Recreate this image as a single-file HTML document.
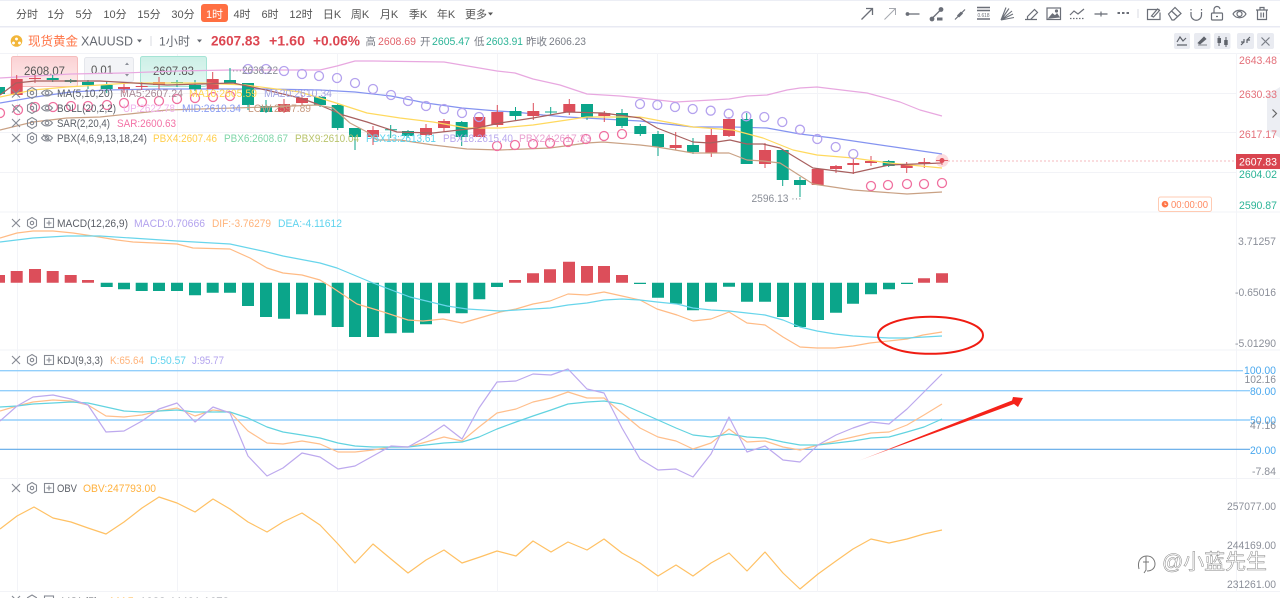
<!DOCTYPE html>
<html lang="zh"><head><meta charset="utf-8"><title>XAUUSD</title>
<style>
html,body{margin:0;padding:0;background:#fff;width:1280px;height:598px;overflow:hidden}
svg{display:block;filter:blur(.35px);font-family:"Liberation Sans","Noto Sans CJK SC",sans-serif;font-size:11px}
.t{fill:#555;font-size:11px}
.ax{fill:#8b8f99;font-size:11px}
.l{fill:none;stroke-linejoin:round;stroke-width:1.2}
.ic{fill:none;stroke:#6b6f78;stroke-width:1.2}
.li{fill:none;stroke:#868a93;stroke-width:1.1}
.lt{fill:#5c6068;font-size:11px}
.bl{fill:#4aa8ee;font-size:11px}
</style></head><body>
<svg width="1280" height="598" viewBox="0 0 1280 598" xmlns="http://www.w3.org/2000/svg">
<defs>
<linearGradient id="ar" gradientUnits="userSpaceOnUse" x1="858" y1="461" x2="905" y2="443"><stop offset="0" stop-color="#ffd4d4"/><stop offset="1" stop-color="#f5231a"/></linearGradient>
<linearGradient id="rb" x1="0" y1="0" x2="0" y2="1"><stop offset="0" stop-color="#fbd2d4"/><stop offset="1" stop-color="#fdecec"/></linearGradient>
<linearGradient id="gb" x1="0" y1="0" x2="0" y2="1"><stop offset="0" stop-color="#cdf0e7"/><stop offset="1" stop-color="#e5f8f3"/></linearGradient>
</defs>
<rect width="1280" height="598" fill="#fff"/>
<rect y="0" width="1280" height="1" fill="#eceef5"/>
<rect y="26" width="1280" height="1.5" fill="#e8eaf3"/>
<path d="M0 53.5H1280M0 93.5H1236M0 132.5H1236M0 172.5H1236M0 212H1280M0 350H1280M0 478.5H1280M0 591.5H1280" stroke="#f2f3f7" fill="none"/>
<path d="M17.5 53V592M177.5 53V592M337.5 53V592M497.5 53V592M657.5 53V592M817.5 53V592M1236.5 53V592" stroke="#f3f4f8" fill="none"/>

<g class="t" text-anchor="middle">
<text x="27" y="18">分时</text><text x="56" y="18">1分</text><text x="84" y="18">5分</text><text x="115" y="18">10分</text><text x="149" y="18">15分</text><text x="183" y="18">30分</text>
<text x="242" y="18">4时</text><text x="270" y="18">6时</text><text x="301" y="18">12时</text><text x="332" y="18">日K</text><text x="360" y="18">周K</text><text x="389" y="18">月K</text><text x="418" y="18">季K</text><text x="446" y="18">年K</text><text x="476" y="18">更多</text>
</g>
<path d="M488 12.5h5l-2.500 3z" fill="#555"/>
<rect x="201" y="4" width="27" height="18" rx="3" fill="#ff6f42"/>
<text x="214.500" y="18" text-anchor="middle" fill="#fff" font-size="11">1时</text>

<circle cx="16.500" cy="41" r="5.800" fill="#f2b63a"/>
<path d="M16.500 37.500a1.500 1.500 0 1 1-.01 0zM13.500 41.500a1.500 1.500 0 1 1-.01 0zM19.500 41.500a1.500 1.500 0 1 1-.01 0z" fill="#fff"/>
<text x="28" y="45.500" font-size="12.500" fill="#ff7547" textLength="50" lengthAdjust="spacingAndGlyphs">现货黄金</text>
<text x="81" y="45.500" font-size="13" fill="#666a72" textLength="52" lengthAdjust="spacingAndGlyphs">XAUUSD</text>
<path d="M137 39.500h5l-2.500 3z" fill="#666a72"/>
<rect x="150.500" y="36" width="1" height="10" fill="#d9dbe2"/>
<text x="159" y="45.500" font-size="12" fill="#666a72" textLength="31" lengthAdjust="spacingAndGlyphs">1小时</text>
<path d="M197 39.500h5l-2.500 3z" fill="#666a72"/>
<g font-weight="700" font-size="13.500" fill="#dc4651">
<text x="211" y="45.500" textLength="49" lengthAdjust="spacingAndGlyphs">2607.83</text>
<text x="269" y="45.500" textLength="36" lengthAdjust="spacingAndGlyphs">+1.60</text>
<text x="313" y="45.500" textLength="47" lengthAdjust="spacingAndGlyphs">+0.06%</text>
</g>
<g font-size="11">
<text x="365.500" y="45" fill="#7a7e87" font-size="10.500">高</text>
<text x="378" y="45" fill="#e2636b" textLength="38" lengthAdjust="spacingAndGlyphs">2608.69</text>
<text x="420" y="45" fill="#7a7e87" font-size="10.500">开</text>
<text x="432" y="45" fill="#2cb497" textLength="38" lengthAdjust="spacingAndGlyphs">2605.47</text>
<text x="474" y="45" fill="#7a7e87" font-size="10.500">低</text>
<text x="486" y="45" fill="#2cb497" textLength="37" lengthAdjust="spacingAndGlyphs">2603.91</text>
<text x="526" y="45" fill="#7a7e87" font-size="10.500">昨收</text>
<text x="549" y="45" fill="#7a7e87" textLength="37" lengthAdjust="spacingAndGlyphs">2606.23</text>
</g>

<g fill="#e9ebf1">
<rect x="1174" y="33" width="16" height="16" rx="2"/><rect x="1194" y="33" width="16.500" height="16" rx="2"/><rect x="1214" y="33" width="16.500" height="16" rx="2"/><rect x="1237" y="33" width="17" height="16" rx="2"/><rect x="1257" y="33" width="17" height="16" rx="2"/>
</g>
<path d="M1177 42l3-5 3 4 3-3M1177 45h10" fill="none" stroke="#5f636b" stroke-width="1.200"/>
<path d="M1198 45h9M1198 43l6-6 2 2-6 5z" fill="#5f636b" stroke="#5f636b" stroke-width=".8"/>
<path d="M1219 36v10M1226 37v10" stroke="#5f636b" stroke-width="1"/><rect x="1217.500" y="38" width="3.500" height="5" fill="#5f636b"/><rect x="1224.200" y="40" width="3.500" height="5" fill="#5f636b"/>
<path d="M1241 45l3-3M1250 37l-3 3M1244 39v3h-3M1247 43v-3h3" fill="none" stroke="#5f636b" stroke-width="1.200"/>
<path d="M1261.500 37.500l8 8m0-8l-8 8" stroke="#7a7e87" stroke-width="1.200"/>

<g class="ic">
<path d="M861.500 19.500L872 9M866 8.500h6.500V15" stroke-width="1.300"/>
<path d="M884.500 19.500L895 9M889 8.500h6.500V15" stroke="#a6a9b0" stroke-width="1"/>
<path d="M907 14h12.500" stroke-width="1.300"/><circle cx="907.500" cy="14" r="1.300" fill="#6b6f78"/>
<path d="M932 18.500L941 9.500" stroke-width="1.300"/><circle cx="932" cy="19" r="1.800" fill="#6b6f78"/><circle cx="941" cy="9.500" r="1.800" fill="#6b6f78"/><rect x="937" y="17.500" width="5.500" height="3" fill="#6b6f78" stroke="none"/>
<path d="M955 19.500L965 9.500"/><path d="M958 16.500L962 12.500" stroke-width="3"/>
<path d="M977 7.500h13M977 10.500h13M977 19h13" stroke-width="1.400"/>
<path d="M1001 20L1006 7.500M1001 20L1009 8.500M1001 20L1012 11M1001 20L1013 14M1001 20L1014 17.500" stroke-width="1.100"/>
<path d="M1025 19.500h12M1027.500 16.500l7-7 3 3-7 7h-3z"/>
<rect x="1047" y="8" width="13.500" height="11.500"/><path d="M1049 18l3.500-4 2.500 2 2-2 2 3z" fill="#6b6f78"/><circle cx="1056.500" cy="11" r="1" fill="#6b6f78"/>
<path d="M1070 15l4-4 4 3 6-5"/><path d="M1070 18.500h14" stroke-dasharray="1.500 1.500"/>
<path d="M1094.500 14h13" stroke-width="1.300"/><path d="M1101 11.500v5"/>
<path d="M1117.500 13h2.500M1122 13h2.500M1126.500 13h2.500" stroke-width="2"/>
<path d="M1138 9v9" stroke="#dfe1e7"/>
<path d="M1159.500 9.500h-12v10h12.500v-7M1151.500 16l6-7 2 1.500-6 6.500z"/>
<path d="M1168.500 14l6.500-6.500 6 6-7 6.500h-2zM1171.500 11l6.500 6"/>
<path d="M1191 12v3a5 5 0 0 0 10.500 0v-3M1191 9v1.500M1201.500 9v1.500"/>
<rect x="1211.500" y="13" width="11" height="7" rx="1"/><path d="M1214 13v-3a3 3 0 0 1 6-1M1216 16.500h2"/>
<path d="M1233 14c3-5 10-5 13 0c-3 5-10 5-13 0z"/><circle cx="1239.500" cy="14" r="2.500"/>
<path d="M1256 10h12M1260 10V7.500h4V10M1257.500 10v9.500h9V10M1261 12.500v5M1263.500 12.500v5"/>
</g>
<text x="977.500" y="17" font-size="5" fill="#6b6f78" textLength="12" lengthAdjust="spacingAndGlyphs">0.618</text>

<path d="M1280 87L1267 95V130L1280 138Z" fill="#eceef3"/>
<path d="M1272.500 109.500l4 4-4 4" fill="none" stroke="#666" stroke-width="1.200"/>

<rect x="11.500" y="56.500" width="66" height="30" rx="2" fill="url(#rb)" stroke="#f5bcbc"/>
<rect x="84.500" y="57.500" width="49" height="24" rx="2" fill="#f3f4f7" stroke="#e5e7ec"/>
<rect x="140.500" y="56.500" width="66" height="30" rx="2" fill="url(#gb)" stroke="#a5e4d5"/>
<text x="24" y="75" font-size="11.500" fill="#555" textLength="41" lengthAdjust="spacingAndGlyphs">2608.07</text>
<text x="91" y="74" font-size="11.500" fill="#555" textLength="22" lengthAdjust="spacingAndGlyphs">0.01</text>
<text x="153" y="75" font-size="11.500" fill="#555" textLength="41" lengthAdjust="spacingAndGlyphs">2607.83</text>
<path d="M125 65l2-2.500 2 2.500zM125 74l2 2.500 2-2.500z" fill="#8b8f98"/>

<polyline class="l" stroke="#e8a8e0" points="0,78 35,76 71,74 124,73 177,71 230,70 266,70 320,70 337,66 355,61 373,61 444,62 497,71 515,73 533,79 560,85 587,94 620,96 640,98 676,102 729,99 747,96 767,95 787,90 800,88 817,87 850,91 867,93 900,102 920,110 942,116"/>
<polyline class="l" stroke="#8493f0" points="0,103 35,97 71,92 107,90 160,89 212,89 266,89 320,90 355,92 391,96 426,103 462,108 497,111 515,112 543,115 567,117 640,121 693,127 733,127 767,128 800,134 833,138 942,154"/>

<path stroke="#0ba58a" stroke-width="1" fill="none" d="M52.700 75V82M70.700 79V83M88 80V89M106.700 82V93M177 80V87M195 80V91M230 68V83M248 83V110M266 100V113M320 96V107M337.700 103V130M355 137V150M390.700 125V138M408 130V138M461.700 121V146M515.500 107V120M550.700 107V115M587 104V120M622 109V128M640.300 124V136M658 131V156M693 138V154M746.700 113V164M782.700 150V186M800 177V197M888.700 160V167M385 129.800H397M545 112H557"/>
<path stroke="#dc4e5a" stroke-width="1" fill="none" d="M16.700 75V95M35 75V83M124 83V93M141.700 82V90M159 77V89M212.700 72V90M284 99V113M302 95V105M373 126V145M426 124V137M444 119V132M497.300 105V127M533.300 103V120M569.300 99V115M604.300 111V122M675.700 132V150M711.300 128V157M729 117V137M765 143V168M836 165V173M853.300 159V174M871 156V166M906.700 162V173M924.300 158V168M942 158V165"/>
<path fill="#0ba58a" d="M-7 87h12v7h-12zM46.700 78h12v2h-12zM64.700 80h12v2h-12zM82 82h12v3h-12zM100.700 85h12v4h-12zM171 82h12v1h-12zM189 85h12v4h-12zM224 80h12v3h-12zM242 83h12v22h-12zM260 106h12v6h-12zM314 97h12v8h-12zM331.700 105h12v23h-12zM349 128h12v9h-12zM402 131h12v5h-12zM455.700 122h12v15h-12zM509.500 111h12v5h-12zM581 104h12v13h-12zM616 113h12v13h-12zM634.300 126h12v8h-12zM652 134h12v13h-12zM687 145h12v7h-12zM740.700 119h12v45h-12zM776.700 150h12v30h-12zM794 180h12v5h-12zM882.700 161h12v5h-12z"/>
<path fill="#dc4e5a" d="M10.700 79h12v16h-12zM29 78h12v1h-12zM118 87h12v2h-12zM135.700 86h12v1h-12zM153 82h12v3h-12zM206.700 79h12v10h-12zM278 104h12v8h-12zM296 98h12v5h-12zM367 130h12v7h-12zM420 128h12v7h-12zM438 121h12v7h-12zM473.300 117h12v20h-12zM491.300 112h12v13h-12zM527.300 111h12v5h-12zM563.300 104h12v8h-12zM598.300 113h12v3h-12zM669.700 145h12v3h-12zM705.300 135h12v18h-12zM723 119h12v17h-12zM759 150h12v14h-12zM811.700 169h12v16h-12zM830 166h12v3h-12zM847.300 163h12v2h-12zM865 161h12v2h-12zM900.700 164h12v4h-12zM918.300 162h12v2h-12zM936 160h12v1h-12z"/>

<polyline class="l" stroke="#ffd95e" points="0,97 33,90 67,87 100,85 130,83 200,83 245,85 300,92 333,102 367,113 400,118 433,122 467,128 500,128 533,125 567,120 587,117 640,117 693,127 733,130 763,138 793,150 817,155 853,158 889,163 942,168"/>
<polyline class="l" stroke="#a8605f" points="0,95 16,83 35,81 100,81 167,85 233,83 266,90 300,98 317,104 343,115 367,122 397,132 433,133 477,128 500,123 533,118 567,112 603,113 640,118 657,128 693,142 710,143 730,140 747,144 763,144 780,148 813,168 853,173 889,165 942,163"/>
<polyline class="l" stroke="#c9a184" points="0,130 33,122 67,118 100,117 167,110 267,107 317,105 333,108 350,123 367,132 377,140 400,140 433,145 467,149 500,150 550,148 587,143 603,142 640,145 657,147 693,153 729,153 747,160 763,161 780,163 813,184 853,190 907,194 942,192"/>

<g fill="none" stroke="#b4a2ee" stroke-width="1.300">
<circle cx="248" cy="69" r="4.500"/><circle cx="266" cy="69" r="4.500"/><circle cx="284" cy="71" r="4.500"/><circle cx="302" cy="74" r="4.500"/><circle cx="319" cy="76" r="4.500"/><circle cx="337" cy="78" r="4.500"/><circle cx="355" cy="83" r="4.500"/><circle cx="373" cy="89" r="4.500"/><circle cx="391" cy="95" r="4.500"/><circle cx="408" cy="101" r="4.500"/><circle cx="426" cy="106" r="4.500"/><circle cx="444" cy="109" r="4.500"/><circle cx="462" cy="113" r="4.500"/><circle cx="479" cy="117" r="4.500"/>
<circle cx="640" cy="104" r="4.500"/><circle cx="657.300" cy="105" r="4.500"/><circle cx="675" cy="107" r="4.500"/><circle cx="692.700" cy="109" r="4.500"/><circle cx="710.700" cy="110.700" r="4.500"/><circle cx="728.700" cy="113.700" r="4.500"/><circle cx="746.300" cy="116.300" r="4.500"/><circle cx="764.300" cy="117" r="4.500"/><circle cx="782.300" cy="122" r="4.500"/><circle cx="800" cy="129.700" r="4.500"/><circle cx="817.300" cy="139" r="4.500"/><circle cx="835.700" cy="147" r="4.500"/><circle cx="853.300" cy="154" r="4.500"/>
</g>
<g fill="none" stroke="#f0709f" stroke-width="1.300">
<circle cx="0" cy="113" r="4.500"/><circle cx="18" cy="110" r="4.500"/><circle cx="35" cy="107" r="4.500"/><circle cx="53" cy="107" r="4.500"/><circle cx="71" cy="106" r="4.500"/><circle cx="88" cy="106" r="4.500"/><circle cx="107" cy="105" r="4.500"/><circle cx="124" cy="103" r="4.500"/><circle cx="142" cy="102" r="4.500"/><circle cx="159" cy="101" r="4.500"/><circle cx="177" cy="99" r="4.500"/><circle cx="195" cy="98" r="4.500"/><circle cx="213" cy="97" r="4.500"/><circle cx="230" cy="96" r="4.500"/>
<circle cx="497" cy="146" r="4.500"/><circle cx="515" cy="145" r="4.500"/><circle cx="533" cy="144" r="4.500"/><circle cx="550" cy="143" r="4.500"/><circle cx="568" cy="142" r="4.500"/><circle cx="586" cy="139" r="4.500"/><circle cx="604" cy="136" r="4.500"/><circle cx="622" cy="134" r="4.500"/>
<circle cx="871" cy="186" r="4.500"/><circle cx="888" cy="185" r="4.500"/><circle cx="907" cy="184" r="4.500"/><circle cx="924" cy="184" r="4.500"/><circle cx="942" cy="183" r="4.500"/>
</g>

<path d="M948 161H1236" stroke="#f6b9bd" stroke-dasharray="2 2" fill="none"/>
<circle cx="942" cy="160.500" r="6.500" fill="#f58c94" opacity=".3"/><circle cx="942" cy="160.500" r="2.500" fill="#e0505c"/>

<text x="232" y="74" font-size="11" fill="#8b8f98" textLength="46" lengthAdjust="spacingAndGlyphs">···2638.22</text>
<text x="751.500" y="202" font-size="11" fill="#8b8f98" textLength="50" lengthAdjust="spacingAndGlyphs">2596.13 ···</text>

<g class="li">
<path d="M12 89.500l8 8m0-8l-8 8M12 104.500l8 8m0-8l-8 8M12 119l8 8m0-8l-8 8M12 134l8 8m0-8l-8 8"/>
<path d="M32 87.500l4.500 2.700v5.600l-4.500 2.700-4.500-2.700v-5.600zM32 102.500l4.500 2.700v5.600l-4.500 2.700-4.500-2.700v-5.600zM32 117.500l4.500 2.700v5.600l-4.500 2.700-4.500-2.700v-5.600zM32 132.500l4.500 2.700v5.600l-4.500 2.700-4.500-2.700v-5.600z"/>
<circle cx="32" cy="93" r="1.700"/><circle cx="32" cy="108" r="1.700"/><circle cx="32" cy="123" r="1.700"/><circle cx="32" cy="138" r="1.700"/>
<path d="M41.500 93c3-4 8-4 11 0c-3 4-8 4-11 0zM41.500 108c3-4 8-4 11 0c-3 4-8 4-11 0zM41.500 123c3-4 8-4 11 0c-3 4-8 4-11 0zM41.500 138c3-4 8-4 11 0c-3 4-8 4-11 0zM43 134.500l8 7"/>
<circle cx="47" cy="93" r="1.800"/><circle cx="47" cy="108" r="1.800"/><circle cx="47" cy="123" r="1.800"/><circle cx="47" cy="138" r="1.800"/>
</g>
<text class="lt" x="57" y="97" textLength="56" lengthAdjust="spacingAndGlyphs">MA(5,10,20)</text>
<text x="120" y="97" fill="#a98a96" textLength="63" lengthAdjust="spacingAndGlyphs">MA5:2607.24</text>
<text x="189" y="97" fill="#ffd54f" textLength="68" lengthAdjust="spacingAndGlyphs">MA10:2605.59</text>
<text x="264" y="97" fill="#a4a4e2" textLength="68" lengthAdjust="spacingAndGlyphs">MA20:2610.34</text>
<text class="lt" x="57" y="112" textLength="59" lengthAdjust="spacingAndGlyphs">BOLL(20,2,2)</text>
<text x="123" y="112" fill="#f0b4ec" textLength="52" lengthAdjust="spacingAndGlyphs">UP:2622.78</text>
<text x="182" y="112" fill="#8a9cf2" textLength="59" lengthAdjust="spacingAndGlyphs">MID:2610.34</text>
<text x="248" y="112" fill="#c89a80" textLength="63" lengthAdjust="spacingAndGlyphs">LOW:2597.89</text>
<text class="lt" x="57" y="127" textLength="53" lengthAdjust="spacingAndGlyphs">SAR(2,20,4)</text>
<text x="117" y="127" fill="#f372a6" textLength="59" lengthAdjust="spacingAndGlyphs">SAR:2600.63</text>
<text class="lt" x="57" y="142" textLength="90" lengthAdjust="spacingAndGlyphs">PBX(4,6,9,13,18,24)</text>
<text x="153" y="142" fill="#ffcf4d" textLength="64" lengthAdjust="spacingAndGlyphs">PBX4:2607.46</text>
<text x="224" y="142" fill="#7fd6a8" textLength="64" lengthAdjust="spacingAndGlyphs">PBX6:2608.67</text>
<text x="295" y="142" fill="#b9c46c" textLength="64" lengthAdjust="spacingAndGlyphs">PBX9:2610.04</text>
<text x="366" y="142" fill="#5cd4ee" textLength="70" lengthAdjust="spacingAndGlyphs">PBX13:2613.61</text>
<text x="443" y="142" fill="#b9a8ee" textLength="70" lengthAdjust="spacingAndGlyphs">PBX18:2615.40</text>
<text x="519" y="142" fill="#eaa0d0" textLength="72" lengthAdjust="spacingAndGlyphs">PBX24:2617.33</text>

<text x="1239" y="64" fill="#e4707a" textLength="38" lengthAdjust="spacingAndGlyphs">2643.48</text>
<text x="1239" y="98" fill="#e4707a" textLength="38" lengthAdjust="spacingAndGlyphs">2630.33</text>
<text x="1239" y="138" fill="#e4707a" textLength="38" lengthAdjust="spacingAndGlyphs">2617.17</text>
<text x="1239" y="178" fill="#2cb497" textLength="38" lengthAdjust="spacingAndGlyphs">2604.02</text>
<text x="1239" y="209" fill="#2cb497" textLength="38" lengthAdjust="spacingAndGlyphs">2590.87</text>
<rect x="1236" y="154" width="44" height="15" fill="#d9444f"/>
<text x="1239" y="165.500" fill="#fff" textLength="38" lengthAdjust="spacingAndGlyphs">2607.83</text>
<rect x="1158.500" y="197" width="53" height="14.500" rx="2" fill="#fff" stroke="#ffcbb3"/>
<circle cx="1165" cy="204.200" r="3.300" fill="#ff7547"/><path d="M1165 202.500v2h1.500" stroke="#fff" stroke-width=".7" fill="none"/>
<text x="1171" y="208" font-size="10.500" fill="#ff8a62" textLength="37" lengthAdjust="spacingAndGlyphs">00:00:00</text>

<g class="li">
<path d="M12 219l8 8m0-8l-8 8"/><path d="M32 217.500l4.500 2.700v5.600l-4.500 2.700-4.500-2.700v-5.600z"/><circle cx="32" cy="223" r="1.700"/>
<rect x="44.500" y="218.500" width="9" height="9"/><path d="M46.500 223h5M49 220.500v5"/>
</g>
<text class="lt" x="57" y="227" textLength="71" lengthAdjust="spacingAndGlyphs">MACD(12,26,9)</text>
<text x="134" y="227" fill="#b3a3ee" textLength="71" lengthAdjust="spacingAndGlyphs">MACD:0.70666</text>
<text x="212" y="227" fill="#ffb37a" textLength="59" lengthAdjust="spacingAndGlyphs">DIF:-3.76279</text>
<text x="278" y="227" fill="#5fd3ee" textLength="64" lengthAdjust="spacingAndGlyphs">DEA:-4.11612</text>
<path fill="#dc4e5a" d="M-7 275h12v7.700h-12zM10.700 271h12v11.700h-12zM29 269h12v13.700h-12zM46.700 271h12v11.700h-12zM64.700 275h12v7.700h-12zM82 280h12v2.700h-12zM509 280h12v2.700h-12zM527 273.300h12v9.400h-12zM544 269.300h12v13.400h-12zM563 261.700h12v21h-12zM581 266h12v16.700h-12zM598 266h12v16.700h-12zM616 275h12v7.700h-12zM918 278.300h12v4.400h-12zM936 273.300h12v9.400h-12z"/>
<path fill="#0ba58a" d="M100.700 282.700h12v4.300h-12zM118 282.700h12v6.600h-12zM135.700 282.700h12v8.300h-12zM153 282.700h12v8.300h-12zM171 282.700h12v8.300h-12zM189 282.700h12v12.600h-12zM206.700 282.700h12v10h-12zM224 282.700h12v10h-12zM242 282.700h12v23.300h-12zM260 282.700h12v34.300h-12zM278 282.700h12v36h-12zM296 282.700h12v31.600h-12zM314 282.700h12v32.600h-12zM331.700 282.700h12v44.300h-12zM349 282.700h12v54.300h-12zM367 282.700h12v54.300h-12zM384.700 282.700h12v50.600h-12zM402 282.700h12v50h-12zM420 282.700h12v41.600h-12zM438 282.700h12v30.600h-12zM455.700 282.700h12v30.600h-12zM473.300 282.700h12v16.600h-12zM491 282.700h12v4.300h-12zM634 282.700h12v1.300h-12zM652 282.700h12v15h-12zM670 282.700h12v21h-12zM687 282.700h12v27.600h-12zM705 282.700h12v19h-12zM723 282.700h12v4h-12zM741 282.700h12v19h-12zM759 282.700h12v19h-12zM777 282.700h12v34.300h-12zM794 282.700h12v44.300h-12zM812 282.700h12v37.300h-12zM830 282.700h12v30h-12zM847 282.700h12v21h-12zM865 282.700h12v11.600h-12zM883 282.700h12v6.600h-12zM901 282.700h12v1.300h-12z"/>
<polyline class="l" stroke="#ffbb85" points="0,238 17,233 33,231 53,231 73,233 93,236 117,240 133,242 177,244 193,248 230,249 250,258 267,268 283,273 302,275 320,280 333,288 357,304 377,310 408,320 423,321 443,319 462,323 483,317 500,312 516,309 533,304 550,301 568,294 587,295 604,292 622,296 640,300 657,309 677,315 693,321 711,319 729,312 747,323 765,325 783,337 800,347 817,348 835,348 853,346 870,343 907,339 923,335 942,332"/>
<polyline class="l" stroke="#68d5eb" points="0,242 33,238 67,236 100,236 177,241 230,244 267,252 283,256 320,263 337,268 373,283 410,297 447,306 467,309 500,311 533,309 550,308 568,305 587,303 604,300 622,299 640,300 657,302 677,304 693,308 711,310 729,311 747,313 765,315 783,320 800,327 817,331 835,334 853,336 870,337 889,338 907,338 942,336"/>
<ellipse cx="930.500" cy="335.300" rx="52.500" ry="18.500" fill="none" stroke="#ef1c12" stroke-width="2"/>
<text x="1238" y="245" class="ax" textLength="38" lengthAdjust="spacingAndGlyphs">3.71257</text>
<text x="1235" y="296" class="ax" textLength="41" lengthAdjust="spacingAndGlyphs">-0.65016</text>
<text x="1235" y="347" class="ax" textLength="41" lengthAdjust="spacingAndGlyphs">-5.01290</text>

<g class="li">
<path d="M12 356l8 8m0-8l-8 8"/><path d="M32 354.500l4.500 2.700v5.600l-4.500 2.700-4.500-2.700v-5.600z"/><circle cx="32" cy="360" r="1.700"/>
<rect x="44.500" y="355.500" width="9" height="9"/><path d="M46.500 360h5M49 357.500v5"/>
</g>
<text class="lt" x="57" y="364" textLength="46" lengthAdjust="spacingAndGlyphs">KDJ(9,3,3)</text>
<text x="110" y="364" fill="#ffb37a" textLength="34" lengthAdjust="spacingAndGlyphs">K:65.64</text>
<text x="150" y="364" fill="#5fd3ee" textLength="36" lengthAdjust="spacingAndGlyphs">D:50.57</text>
<text x="192" y="364" fill="#b3a3ee" textLength="32" lengthAdjust="spacingAndGlyphs">J:95.77</text>
<path d="M0 370.700H1243M0 390.700H1250M0 420H1250" stroke="#93cffb" stroke-width="1.400" fill="none"/>
<path d="M0 449.300H1250" stroke="#5ea8e8" stroke-width="1.100" fill="none"/>
<polyline class="l" stroke="#ffbf8c" points="0,411 17,406 33,402 53,400 71,401 88,405 106,416 124,417 142,415 159,411 177,408 195,416 213,410 230,412 248,431 267,443 283,444 302,441 320,444 338,452 355,452 373,450 391,447 408,447 426,442 444,437 462,441 479,427 497,413 516,409 533,402 551,398 568,392 587,398 604,398 622,413 640,428 658,437 676,441 693,449 711,443 729,429 747,442 765,441 783,447 800,450 818,445 836,441 853,437 871,433 889,432 907,425 924,415 942,404"/>
<polyline class="l" stroke="#62d3e0" points="0,407 17,406 33,404 53,403 71,402 88,403 106,407 124,411 142,412 159,411 177,410 195,412 213,412 230,412 248,418 267,427 283,432 302,435 320,438 338,443 355,446 373,447 391,447 408,447 426,445 444,443 462,442 479,437 497,429 516,422 533,416 551,410 568,404 587,402 604,401 622,404 640,412 658,420 676,428 693,435 711,437 729,434 747,437 765,438 783,442 800,445 818,445 836,443 853,441 871,438 889,437 907,432 924,427 942,419"/>
<polyline class="l" stroke="#bda9ee" points="0,421 17,406 33,397 53,395 71,399 88,405 106,432 124,431 142,421 159,409 177,403 195,422 213,407 230,413 248,456 267,476 283,468 302,453 320,457 338,469 355,466 373,456 391,446 408,447 426,437 444,425 462,439 479,408 497,382 516,381 533,374 551,375 568,369 587,389 604,393 622,428 640,459 658,470 676,469 693,477 711,454 729,417 747,452 765,446 783,460 800,462 818,445 836,435 853,428 871,422 889,424 907,409 924,392 942,374"/>
<polygon points="858,461 1012,400.500 1013,397 1023,398 1018,407 1014,404" fill="url(#ar)"/>
<text x="1244" y="374" class="bl" textLength="32" lengthAdjust="spacingAndGlyphs">100.00</text>
<text x="1244.500" y="383" class="ax" textLength="31.500" lengthAdjust="spacingAndGlyphs">102.16</text>
<text x="1250" y="395" class="bl" textLength="26" lengthAdjust="spacingAndGlyphs">80.00</text>
<text x="1250" y="424" class="bl" textLength="26" lengthAdjust="spacingAndGlyphs">50.00</text>
<text x="1250" y="429" class="ax" textLength="26" lengthAdjust="spacingAndGlyphs">47.16</text>
<text x="1250" y="454" class="bl" textLength="26" lengthAdjust="spacingAndGlyphs">20.00</text>
<text x="1252" y="475" class="ax" textLength="24" lengthAdjust="spacingAndGlyphs">-7.84</text>

<g class="li">
<path d="M12 484l8 8m0-8l-8 8"/><path d="M32 482.500l4.500 2.700v5.600l-4.500 2.700-4.500-2.700v-5.600z"/><circle cx="32" cy="488" r="1.700"/>
<rect x="44.500" y="483.500" width="9" height="9"/><path d="M46.500 488h5M49 485.500v5"/>
</g>
<text class="lt" x="57" y="492" textLength="20" lengthAdjust="spacingAndGlyphs">OBV</text>
<text x="83" y="492" fill="#ffb13d" textLength="73" lengthAdjust="spacingAndGlyphs">OBV:247793.00</text>
<polyline class="l" stroke="#ffc164" points="0,529 17,516 34,507 53,518 71,522 88,528 106,534 124,522 142,508 159,497 177,503 195,512 213,499 230,509 248,522 267,532 283,522 302,513 320,525 338,544 355,563 373,544 391,559 408,573 426,560 444,550 462,563 480,557 497,551 516,556 533,541 551,552 568,542 587,550 604,539 622,553 640,563 658,576 676,565 693,576 711,563 729,553 747,571 765,552 783,573 800,589 818,574 836,561 853,549 871,539 889,543 907,539 924,534 942,530"/>
<text x="1227" y="510" class="ax" textLength="49" lengthAdjust="spacingAndGlyphs">257077.00</text>
<text x="1227" y="549" class="ax" textLength="49" lengthAdjust="spacingAndGlyphs">244169.00</text>
<text x="1227" y="588" class="ax" textLength="49" lengthAdjust="spacingAndGlyphs">231261.00</text>

<g class="li">
<path d="M12 596l8 8m0-8l-8 8"/><path d="M32 595l4.500 2.700v5.600h-9v-5.600z"/>
<rect x="44.500" y="596" width="9" height="9"/>
</g>
<text class="lt" x="62" y="605" textLength="36" lengthAdjust="spacingAndGlyphs">VOL(5)</text>
<text x="110" y="605" fill="#ffb13d" textLength="24" lengthAdjust="spacingAndGlyphs">MA5</text>
<text x="140" y="605" fill="#8b8f98" textLength="89" lengthAdjust="spacingAndGlyphs">1023.44401.1673</text>

<g fill="none" stroke="#fff" stroke-width="3"><path d="M1139 569c-2-8 2-13 8-13c6 0 8 5 8 8c0 4-3 7-8 7M1146 556v14l-2 3"/></g>
<g fill="none" stroke="#777" stroke-width="1"><path d="M1139 569c-2-8 2-13 8-13c6 0 8 5 8 8c0 4-3 7-8 7M1146 556v14l-2 3M1143 562h6"/></g>
<text x="1162" y="569" font-size="21" fill="#fff" stroke="#888" stroke-width=".5" textLength="105" lengthAdjust="spacingAndGlyphs">@小蓝先生</text>
</svg>
</body></html>
